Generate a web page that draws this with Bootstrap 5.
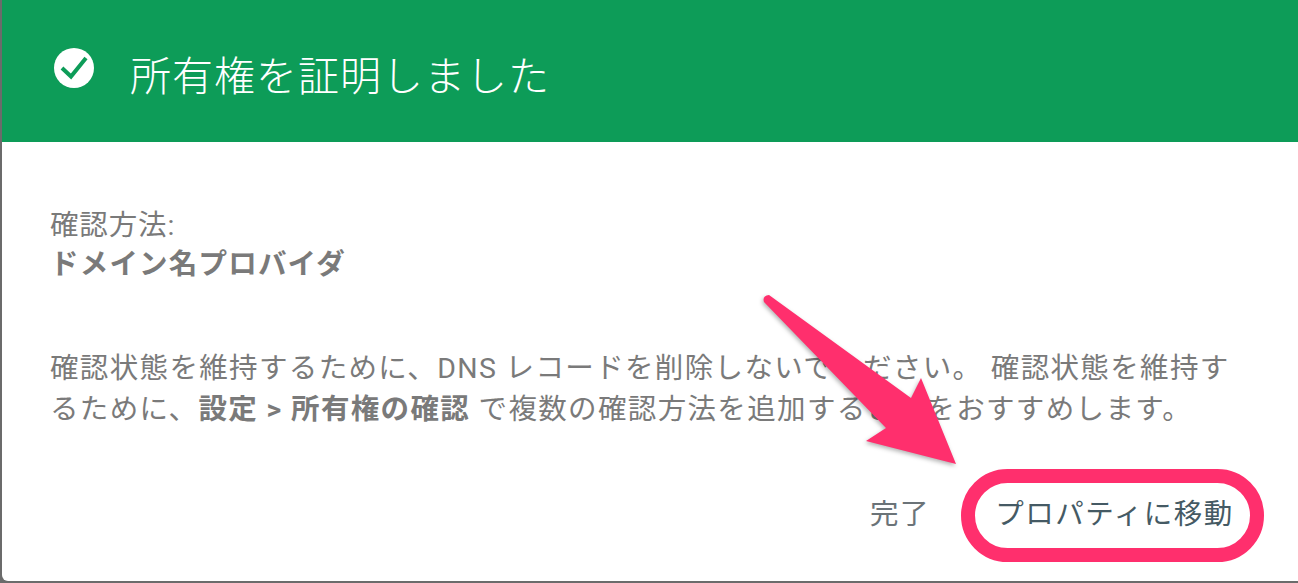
<!DOCTYPE html>
<html lang="ja">
<head>
<meta charset="utf-8">
<title>所有権を証明しました</title>
<link href="https://cdn.jsdelivr.net/npm/bootstrap@5.3.0/dist/css/bootstrap.min.css" rel="stylesheet">
<style>
html,body{height:583px;overflow:hidden}
body{background:#6b6b6b;font-family:"Roboto","Noto Sans CJK JP",sans-serif;padding:0 0 2px 2px}
.dlg{height:581px;border:0;border-radius:0 0 0 6px;background:#fff;position:relative;overflow:hidden}
.dlg-head{height:142px;background:#0d9c58;color:#fff;padding:0 0 0 52px;border:0;border-radius:0!important}
.dlg-head svg{margin-top:-6px;flex:none}
.dlg-title{font-size:41px;font-weight:300;letter-spacing:1px;margin:0 0 0 36px;line-height:1;position:relative;top:6px}
.dlg-body{padding:65px 0 0 48px;color:#7a7a7a;font-size:28.5px;letter-spacing:.85px;line-height:41px;flex:none}
.dlg-method{line-height:38px;margin:0 0 65px}
.dlg-method b{letter-spacing:1.2px;position:relative;top:1px}
.dlg-note{margin:0;width:1200px;letter-spacing:1.35px}
.dlg-foot{margin-top:auto;padding:0 34px 19px 0;background:none;border:0}
.act{font-size:28.5px;letter-spacing:1.5px;line-height:1;background:none;border-radius:47px;padding:0;white-space:nowrap}
.act-done{color:#6b7378;border:0;margin-right:31px}
.act-go{color:#455a64;border:14px solid #ff2f6d;height:93px;width:303px;padding-left:4px}
.mark-arrow{position:absolute;left:-2px;top:0;pointer-events:none;filter:drop-shadow(-1px 2px 2px rgba(0,0,0,.3))}
</style>
</head>
<body>
<div class="card dlg">
  <div class="card-header dlg-head d-flex align-items-center">
    <svg width="40" height="40" viewBox="0 0 40 40" aria-hidden="true"><circle cx="20" cy="20" r="20" fill="#fff"/><path d="M8 20l9 8.5L32 10" fill="none" stroke="#0d9c58" stroke-width="4"/></svg>
    <h1 class="dlg-title">所有権を証明しました</h1>
  </div>
  <div class="card-body dlg-body">
    <p class="dlg-method">確認方法:<br><b>ドメイン名プロバイダ</b></p>
    <p class="dlg-note">確認状態を維持するために、DNS レコードを削除しないでください。 確認状態を維持するために、<b>設定 &gt; 所有権の確認</b> で複数の確認方法を追加することをおすすめします。</p>
  </div>
  <div class="card-footer dlg-foot d-flex justify-content-end align-items-center">
    <button type="button" class="btn act act-done">完了</button>
    <button type="button" class="btn act act-go">プロパティに移動</button>
  </div>
  <svg class="mark-arrow" width="1298" height="583" viewBox="0 0 1298 583" aria-hidden="true">
    <path d="M764 302 Q762 296 769 295 L911 398 L921 378 L956 464 L866 441 L886 428 Z" fill="#ff2f6d"/>
  </svg>
</div>
<script src="https://cdn.jsdelivr.net/npm/bootstrap@5.3.0/dist/js/bootstrap.bundle.min.js"></script>
</body>
</html>
